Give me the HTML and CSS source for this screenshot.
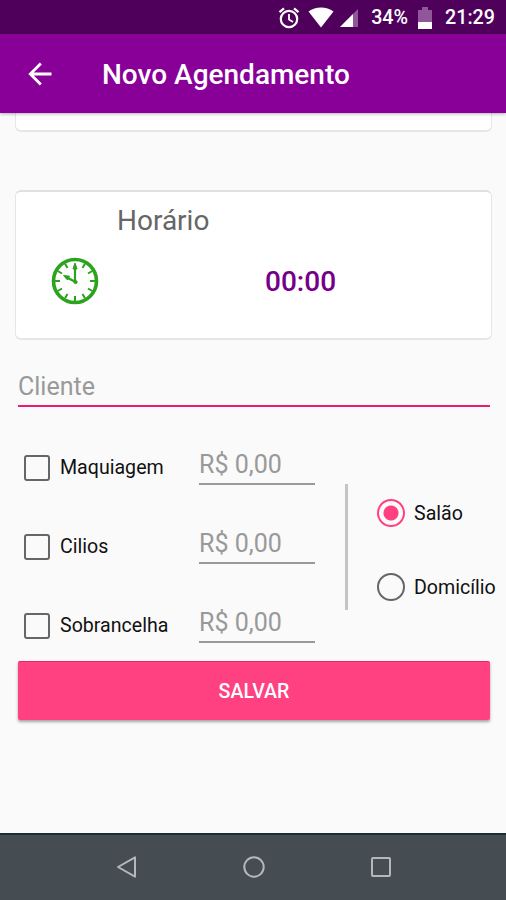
FILE: index.html
```html
<!DOCTYPE html>
<html lang="pt-BR">
<head>
    <meta charset="UTF-8">
    <meta name="viewport" content="width=device-width, initial-scale=1.0">
    <title>Novo Agendamento</title>
    <link rel="stylesheet" href="styles.css">
</head>
<body>
    <div class="status-bar">
        <svg class="alarm" width="22" height="22" viewBox="0 0 22 22" fill="none" stroke="#fff">
            <circle cx="11" cy="12" r="8.2" stroke-width="2.2"/>
            <path d="M11 7v5.500l4 2.600" stroke-width="1.800"/>
            <path d="M1.500 5.200L6 1.400M20.500 5.200L16 1.400" stroke-width="2.200"/>
        </svg>
        <svg class="wifi" width="26" height="21" viewBox="0 0 26 21">
            <path d="M.5 4.500Q6 .5 13 .5t12.500 4L13 20.500z" fill="#fff"/>
        </svg>
        <svg class="signal" width="19" height="19" viewBox="0 0 19 19">
            <path d="M0 19L18 1v18z" fill="#8f5699"/>
            <path d="M0 19L13 6v13z" fill="#fff"/>
        </svg>
        <span class="percent">34%</span>
        <svg class="battery" width="14" height="22" viewBox="0 0 14 22">
            <path d="M0 3h4V0h6v3h4v12H0z" fill="#8f5699"/>
            <path d="M0 15h14v7H0z" fill="#fff"/>
        </svg>
        <span class="clock">21:29</span>
    </div>
    <header>
        <svg class="back" width="24" height="24" viewBox="0 0 24 24" fill="none" stroke="#fff" stroke-width="2.800">
            <path d="M23.500 12H2.500M12.800 1.500L2.300 12l10.500 10.500"/>
        </svg>
        <h1>Novo Agendamento</h1>
    </header>
    <main>
        <div class="card card-date"></div>
        <div class="card card-time">
            <h2>Horário</h2>
            <div class="time-row">
                <svg width="48" height="48" viewBox="0 0 48 48" fill="none" stroke="#2ca31c">
                    <circle cx="24" cy="24" r="21.500" stroke-width="3.600"/>
                    <path d="M24 39v5M4 24h5M39 24h5M31.500 37l2.500 4.300M37 31.500l4.300 2.500M37 16.500l4.300-2.500M31.500 11L34 6.700M16.500 11L14 6.700M11 16.500L6.700 14M11 31.500L6.700 34M16.500 37L14 41.300" stroke-width="2"/>
                    <path d="M24 7v18.500M26 25.800L15 20" stroke-width="2.200"/>
                    <path d="M24 6l2 6h-4zM12.500 18.500l6 .7-2 3.800z" fill="#2ca31c" stroke-width="1"/>
                    <circle cx="24.500" cy="25" r="1.600" fill="#2ca31c"/>
                </svg>
                <span class="time">00:00</span>
            </div>
        </div>
        <input type="text" class="client" placeholder="Cliente">
        <div class="options">
            <div class="services">
                <div class="service">
                    <label><input type="checkbox">Maquiagem</label>
                    <input type="text" class="price" placeholder="R$ 0,00">
                </div>
                <div class="service">
                    <label><input type="checkbox">Cilios</label>
                    <input type="text" class="price" placeholder="R$ 0,00">
                </div>
                <div class="service">
                    <label><input type="checkbox">Sobrancelha</label>
                    <input type="text" class="price" placeholder="R$ 0,00">
                </div>
            </div>
            <div class="divider"></div>
            <div class="places">
                <label><input type="radio" name="place" checked>Salão</label>
                <label><input type="radio" name="place">Domicílio</label>
            </div>
        </div>
        <button type="button" class="save">SALVAR</button>
    </main>
    <nav>
        <svg width="22" height="24" viewBox="0 0 22 24" fill="none" stroke="#b4b8ba" stroke-width="2" stroke-linejoin="round">
            <path d="M2 12L19 2.300v19.400z"/>
        </svg>
        <svg width="22" height="24" viewBox="0 0 22 24" fill="none" stroke="#b4b8ba" stroke-width="2">
            <circle cx="11" cy="12" r="9.700"/>
        </svg>
        <svg width="22" height="24" viewBox="0 0 22 24" fill="none" stroke="#b4b8ba" stroke-width="2">
            <rect x="2" y="3" width="18" height="18" rx="1"/>
        </svg>
    </nav>
</body>
</html>
```

FILE: styles.css
```css
* { margin: 0; padding: 0; box-sizing: border-box; }
body {
    font-family: Roboto, sans-serif;
    background: #fafafa;
    height: 900px;
    display: flex;
    flex-direction: column;
    overflow: hidden;
}
.status-bar {
    height: 34px;
    background: #4e005a;
    color: white;
    display: flex;
    align-items: center;
    justify-content: flex-end;
    padding-right: 11px;
    padding-top: 1px;
    font-size: 19.7px;
    font-weight: 500;
}
.wifi { margin-left: 8px; }
.signal { margin-left: 6px; }
.percent { margin-left: 12px; }
.battery { margin-left: 10px; }
.clock { margin-left: 13px; }
header {
    height: 79px;
    background: #880098;
    color: white;
    display: flex;
    align-items: center;
    padding: 0 28px;
    box-shadow: 0 1px 3px rgba(0, 0, 0, 0.3);
    z-index: 1;
}
h1 {
    margin-left: 50px;
    padding-top: 1px;
    font-size: 28px;
    font-weight: 500;
}
main {
    flex: 1;
    padding: 0 14px;
    display: flex;
    flex-direction: column;
}
.card {
    margin-left: 1px;
    background: white;
    border: 1px solid #e6e6e6;
    border-top: 2px solid #e0e0e0;
    border-bottom-width: 2px;
    border-radius: 6px;
}
.card-date {
    height: 19px;
    border-top: none;
    border-radius: 0 0 6px 6px;
}
.card-time {
    height: 150px;
    margin-top: 58px;
    padding: 12px 0 0 35px;
}
h2 {
    margin-left: 66px;
    font-size: 28px;
    line-height: 34px;
    font-weight: 400;
    color: #666;
}
.time-row {
    display: flex;
    align-items: center;
    margin-top: 19px;
}
.time {
    margin-left: 166px;
    padding-top: 1px;
    font-size: 28px;
    font-weight: 500;
    color: #740088;
}
input {
    font-family: inherit;
    background: none;
    border: none;
    outline: none;
}
input::placeholder { color: #999; opacity: 1; }
.client {
    height: 38px;
    margin: 29px 2px 0 4px;
    padding-bottom: 2px;
    border-bottom: 2px solid #e91e70;
    font-size: 25px;
}
.options {
    display: flex;
    height: 254px;
    padding-top: 38px;
}
.services {
    width: 331px;
    flex: none;
    display: flex;
    flex-direction: column;
    gap: 39px;
}
.service {
    display: flex;
    height: 40px;
}
label {
    display: flex;
    align-items: center;
    font-size: 19.6px;
    color: #111;
    white-space: nowrap;
}
.service label {
    width: 185px;
    padding: 5px 0 0 10px;
}
input[type="checkbox"], input[type="radio"] {
    appearance: none;
    flex: none;
    border: 2px solid #666;
}
input[type="checkbox"] {
    width: 26px;
    height: 26px;
    margin-right: 10px;
    border-radius: 3px;
}
input[type="radio"] {
    width: 28px;
    height: 28px;
    margin-right: 9px;
    border-radius: 50%;
}
input[type="radio"]:checked {
    border-color: #ff4081;
    background: radial-gradient(circle, #ff4081 7px, transparent 8px);
}
.price {
    width: 116px;
    border-bottom: 2px solid #999;
    font-size: 25px;
}
.divider {
    width: 3px;
    flex: none;
    height: 126px;
    margin-top: 39px;
    background: #c4c4c4;
}
.places {
    display: flex;
    flex-direction: column;
    gap: 46px;
    margin: 54px 0 0 29px;
}
.places label { height: 28px; }
.save {
    height: 59px;
    margin: 0 2px 0 4px;
    background: #ff4081;
    color: white;
    border: none;
    border-top: 1px solid #ec2470;
    border-radius: 2px;
    box-shadow: 0 2px 3px rgba(0, 0, 0, 0.35);
    font-family: inherit;
    font-size: 19.6px;
    font-weight: 500;
}
nav {
    height: 67px;
    padding: 0 0 2px 2px;
    background: #454d52;
    border-top: 2px solid #172f2e;
    display: flex;
    align-items: center;
    justify-content: center;
    gap: 105px;
}
```
